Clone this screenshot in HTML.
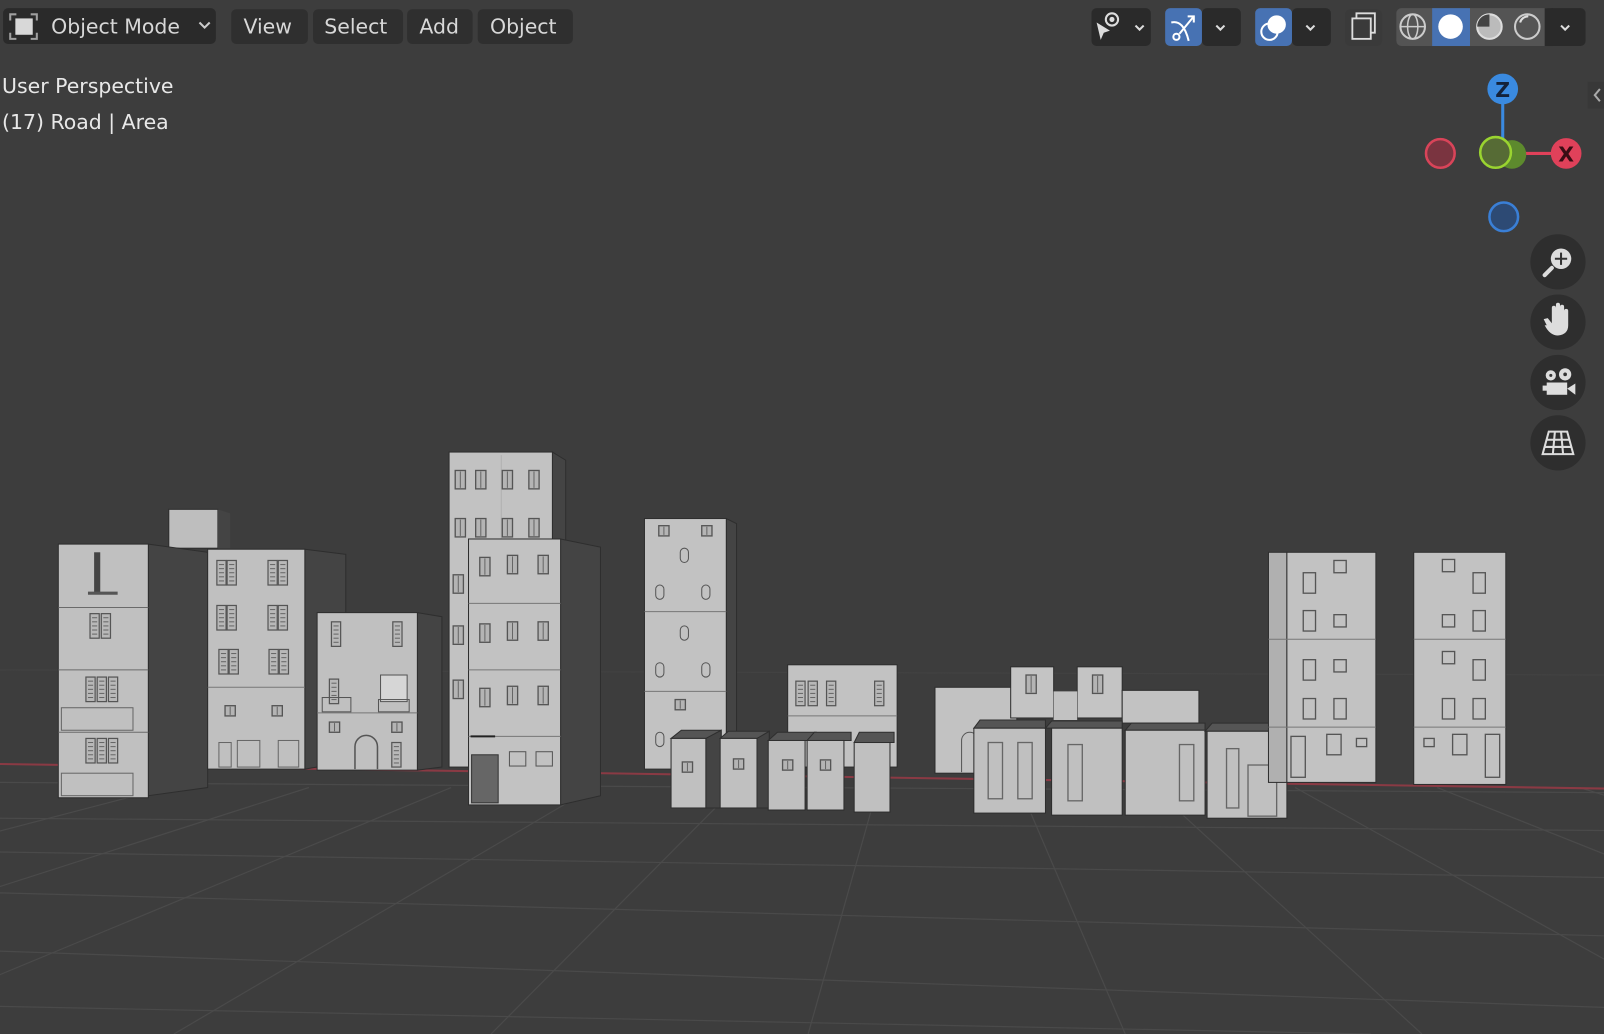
<!DOCTYPE html>
<html><head><meta charset="utf-8"><style>
html,body{margin:0;padding:0;background:#3d3d3d;overflow:hidden}
svg{display:block}
text{font-family:"DejaVu Sans","Liberation Sans",sans-serif}
</style></head><body>
<svg width="1604" height="1034" viewBox="0 0 1568 1011" preserveAspectRatio="none" xmlns="http://www.w3.org/2000/svg">
<defs>
<g id="w"><rect x="0" y="0" width="10" height="18" fill="#b4b4b4" stroke="#555" stroke-width="1.3"/><line x1="5" y1="1" x2="5" y2="17" stroke="#666" stroke-width="1"/></g>
<g id="ws"><rect x="0" y="0" width="10" height="10" fill="#b4b4b4" stroke="#555" stroke-width="1.3"/><line x1="5" y1="1" x2="5" y2="9" stroke="#666"/></g>
<g id="wt"><rect x="0" y="0" width="9" height="24" fill="#b8b8b8" stroke="#555" stroke-width="1.2"/><line x1="2" y1="4" x2="7" y2="4" stroke="#666"/><line x1="2" y1="8" x2="7" y2="8" stroke="#666"/><line x1="2" y1="12" x2="7" y2="12" stroke="#666"/><line x1="2" y1="16" x2="7" y2="16" stroke="#666"/><line x1="2" y1="20" x2="7" y2="20" stroke="#666"/></g>
</defs>
<rect width="1568" height="1011" fill="#3d3d3d"/>
<g stroke="#4a4a4a" stroke-width="1.2" fill="none">
<line x1="0" y1="655" x2="1568" y2="660" stroke="#424242"/>
<line x1="0" y1="765" x2="1568" y2="775"/>
<line x1="0" y1="800" x2="1568" y2="812"/>
<line x1="0" y1="833" x2="1568" y2="858"/>
<line x1="0" y1="873" x2="1568" y2="915"/>
<line x1="0" y1="930" x2="1568" y2="985"/>
<line x1="0" y1="984" x2="1340" y2="1011"/>
<line x1="580" y1="770" x2="170" y2="1011"/>
<line x1="719" y1="770" x2="480" y2="1011"/>
<line x1="858" y1="770" x2="790" y2="1011"/>
<line x1="997" y1="770" x2="1100" y2="1011"/>
<line x1="1127" y1="770" x2="1390" y2="1011"/>
<line x1="441" y1="770" x2="-140" y2="1011"/>
<line x1="302" y1="770" x2="-450" y2="1011"/>
<line x1="163" y1="770" x2="-760" y2="1011"/>
<line x1="1266" y1="770" x2="1700" y2="1011"/>
<line x1="1405" y1="770" x2="2010" y2="1011"/>
<line x1="1544" y1="770" x2="2320" y2="1011"/>
</g>
<line x1="0" y1="747" x2="1568" y2="771" stroke="#8a3a44" stroke-width="2"/>

<rect x="165" y="498" width="48" height="38" fill="#bebebe" stroke="#2e2e2e"/>
<polygon points="213,498 225,502 225,536 213,536" fill="#444"/>
<polygon points="145,532 203,540 203,770 145,778" fill="#444" stroke="#2e2e2e"/>
<rect x="57" y="532" width="88" height="248" fill="#c0c0c0" stroke="#2e2e2e"/>
<g stroke="#6a6a6a" fill="none"><line x1="57" y1="594" x2="145" y2="594"/><line x1="57" y1="655" x2="145" y2="655"/><line x1="57" y1="716" x2="145" y2="716"/></g>
<rect x="92" y="540" width="6" height="40" fill="#444"/><line x1="86" y1="580" x2="115" y2="580" stroke="#555" stroke-width="3"/>
<use href="#wt" x="88" y="600"/><use href="#wt" x="99" y="600"/>
<use href="#wt" x="84" y="662"/><use href="#wt" x="95" y="662"/><use href="#wt" x="106" y="662"/>
<rect x="60" y="692" width="70" height="22" fill="none" stroke="#666"/>
<use href="#wt" x="84" y="722"/><use href="#wt" x="95" y="722"/><use href="#wt" x="106" y="722"/>
<rect x="60" y="756" width="70" height="22" fill="none" stroke="#666"/>
<polygon points="298,537 338,542 338,745 298,752" fill="#444" stroke="#2e2e2e"/>
<rect x="203" y="537" width="95" height="215" fill="#c0c0c0" stroke="#2e2e2e"/>
<line x1="203" y1="672" x2="298" y2="672" stroke="#777"/>
<use href="#wt" x="212" y="548"/><use href="#wt" x="222" y="548"/><use href="#wt" x="262" y="548"/><use href="#wt" x="272" y="548"/>
<use href="#wt" x="212" y="592"/><use href="#wt" x="222" y="592"/><use href="#wt" x="262" y="592"/><use href="#wt" x="272" y="592"/>
<use href="#wt" x="214" y="635"/><use href="#wt" x="224" y="635"/><use href="#wt" x="263" y="635"/><use href="#wt" x="273" y="635"/>
<use href="#ws" x="220" y="690"/><use href="#ws" x="266" y="690"/>
<rect x="214" y="726" width="12" height="24" fill="none" stroke="#666"/><rect x="232" y="724" width="22" height="26" fill="none" stroke="#666"/><rect x="272" y="724" width="20" height="26" fill="none" stroke="#666"/>
<polygon points="408,599 432,603 432,750 408,753" fill="#444" stroke="#2e2e2e"/>
<rect x="310" y="599" width="98" height="154" fill="#c0c0c0" stroke="#2e2e2e"/>
<line x1="310" y1="697" x2="408" y2="697" stroke="#777"/>
<use href="#wt" x="324" y="608"/><use href="#wt" x="384" y="608"/>
<use href="#wt" x="322" y="664"/><rect x="372" y="660" width="26" height="26" fill="#d6d6d6" stroke="#555"/>
<rect x="315" y="682" width="28" height="14" fill="none" stroke="#555"/><rect x="370" y="684" width="30" height="12" fill="none" stroke="#555"/>
<use href="#ws" x="322" y="706"/><use href="#ws" x="383" y="706"/>
<path d="M347,752 V730 a11,11 0 0 1 22,0 V752" fill="none" stroke="#555" stroke-width="1.5"/>
<use href="#wt" x="383" y="726"/>
<polygon points="540,442 553,450 553,750 540,750" fill="#444" stroke="#2e2e2e"/>
<rect x="439" y="442" width="101" height="308" fill="#c2c2c2" stroke="#2e2e2e"/>
<line x1="490" y1="445" x2="490" y2="528" stroke="#b0b0b0"/>
<use href="#w" x="445" y="460"/><use href="#w" x="465" y="460"/><use href="#w" x="491" y="460"/><use href="#w" x="517" y="460"/>
<use href="#w" x="445" y="507"/><use href="#w" x="465" y="507"/><use href="#w" x="491" y="507"/><use href="#w" x="517" y="507"/>
<use href="#w" x="443" y="562"/><use href="#w" x="443" y="612"/><use href="#w" x="443" y="665"/>
<polygon points="548,527 587,535 587,778 548,787" fill="#444" stroke="#2e2e2e"/>
<rect x="458" y="527" width="90" height="260" fill="#c2c2c2" stroke="#2e2e2e"/>
<g stroke="#777"><line x1="458" y1="590" x2="548" y2="590"/><line x1="458" y1="655" x2="548" y2="655"/><line x1="458" y1="720" x2="548" y2="720"/></g>
<use href="#w" x="469" y="545"/><use href="#w" x="496" y="543"/><use href="#w" x="526" y="543"/>
<use href="#w" x="469" y="610"/><use href="#w" x="496" y="608"/><use href="#w" x="526" y="608"/>
<use href="#w" x="469" y="673"/><use href="#w" x="496" y="671"/><use href="#w" x="526" y="671"/>
<line x1="460" y1="720" x2="484" y2="720" stroke="#222" stroke-width="2"/>
<rect x="461" y="738" width="26" height="47" fill="#666" stroke="#333"/>
<rect x="498" y="735" width="16" height="14" fill="none" stroke="#555"/><rect x="524" y="735" width="16" height="14" fill="none" stroke="#555"/>
<polygon points="710,507 720,512 720,750 710,752" fill="#444" stroke="#2e2e2e"/>
<rect x="630" y="507" width="80" height="245" fill="#c2c2c2" stroke="#2e2e2e"/>
<g stroke="#777"><line x1="630" y1="598" x2="710" y2="598"/><line x1="630" y1="676" x2="710" y2="676"/></g>
<use href="#ws" x="644" y="514"/><use href="#ws" x="686" y="514"/>
<rect x="665" y="536" width="8" height="14" rx="4" fill="none" stroke="#555"/>
<rect x="641" y="572" width="8" height="14" rx="4" fill="none" stroke="#555"/><rect x="686" y="572" width="8" height="14" rx="4" fill="none" stroke="#555"/>
<rect x="665" y="612" width="8" height="14" rx="4" fill="none" stroke="#555"/>
<rect x="641" y="648" width="8" height="14" rx="4" fill="none" stroke="#555"/><rect x="686" y="648" width="8" height="14" rx="4" fill="none" stroke="#555"/>
<use href="#ws" x="660" y="684"/><rect x="641" y="716" width="8" height="14" rx="4" fill="none" stroke="#555"/>
<rect x="770" y="650" width="107" height="100" fill="#c2c2c2" stroke="#2e2e2e"/>
<line x1="770" y1="700" x2="877" y2="700" stroke="#777"/>
<use href="#wt" x="778" y="666"/><use href="#wt" x="790" y="666"/><use href="#wt" x="808" y="666"/><use href="#wt" x="855" y="666"/>
<g stroke="#2e2e2e">
<polygon points="656,722 666,714 705,714 705,722" fill="#555"/><polygon points="690,722 705,714 705,790 690,790" fill="#444"/><rect x="656" y="722" width="34" height="68" fill="#c0c0c0"/>
<polygon points="704,722 712,715 752,715 752,722" fill="#555"/><polygon points="740,722 752,715 752,790 740,790" fill="#444"/><rect x="704" y="722" width="36" height="68" fill="#c0c0c0"/>
<polygon points="751,724 760,716 798,716 798,724" fill="#555"/><rect x="751" y="724" width="36" height="68" fill="#c0c0c0"/>
<polygon points="789,724 796,716 832,716 832,724" fill="#555"/><rect x="789" y="724" width="36" height="68" fill="#c0c0c0"/>
<polygon points="835,726 840,716 874,716 874,726" fill="#555"/><rect x="835" y="726" width="35" height="68" fill="#c0c0c0"/>
</g>
<use href="#ws" x="667" y="745"/><use href="#ws" x="717" y="742"/><use href="#ws" x="765" y="743"/><use href="#ws" x="802" y="743"/>
<rect x="914" y="672" width="80" height="84" fill="#c2c2c2" stroke="#2e2e2e"/>
<rect x="988" y="652" width="42" height="50" fill="#c4c4c4" stroke="#2e2e2e"/>
<rect x="1053" y="652" width="44" height="50" fill="#c4c4c4" stroke="#2e2e2e"/>
<rect x="1030" y="676" width="23" height="28" fill="#c2c2c2"/>
<rect x="1097" y="675" width="75" height="32" fill="#c2c2c2" stroke="#2e2e2e"/>
<use href="#w" x="1003" y="660"/><use href="#w" x="1068" y="660"/>
<path d="M940,755 V724 a8,8 0 0 1 16,0 V755" fill="none" stroke="#555"/>
<g stroke="#2e2e2e">
<polygon points="952,712 958,704 1022,704 1022,712" fill="#555"/><rect x="952" y="712" width="70" height="83" fill="#c0c0c0"/>
<polygon points="1022,712 1028,705 1097,705 1097,712" fill="#555"/><rect x="1028" y="712" width="69" height="85" fill="#c0c0c0"/>
<polygon points="1100,714 1106,707 1178,707 1178,714" fill="#555"/><rect x="1100" y="714" width="78" height="83" fill="#c0c0c0"/>
<polygon points="1178,715 1185,707 1250,707 1258,715" fill="#555"/><rect x="1180" y="715" width="78" height="85" fill="#c0c0c0"/>
</g>
<g fill="none" stroke="#666" stroke-width="1.3">
<rect x="966" y="726" width="14" height="55"/><rect x="995" y="726" width="14" height="55"/>
<rect x="1044" y="728" width="14" height="55"/><rect x="1153" y="728" width="14" height="55"/>
<rect x="1199" y="732" width="12" height="58"/><rect x="1220" y="748" width="28" height="50"/>
</g>
<rect x="1240" y="540" width="18" height="225" fill="#b0b0b0" stroke="#2e2e2e"/>
<rect x="1258" y="540" width="87" height="225" fill="#c2c2c2" stroke="#2e2e2e"/>
<g stroke="#777"><line x1="1240" y1="625" x2="1345" y2="625"/><line x1="1240" y1="711" x2="1345" y2="711"/></g>
<g fill="none" stroke="#555" stroke-width="1.3">
<rect x="1274" y="560" width="12" height="20"/><rect x="1304" y="548" width="12" height="12"/>
<rect x="1274" y="597" width="12" height="20"/><rect x="1304" y="601" width="12" height="12"/>
<rect x="1274" y="645" width="12" height="20"/><rect x="1304" y="645" width="12" height="12"/>
<rect x="1274" y="683" width="12" height="20"/><rect x="1304" y="683" width="12" height="20"/>
<rect x="1262" y="720" width="14" height="40"/><rect x="1297" y="718" width="14" height="20"/><rect x="1326" y="722" width="10" height="8"/>
</g>
<rect x="1382" y="540" width="90" height="227" fill="#c2c2c2" stroke="#2e2e2e"/>
<g stroke="#777"><line x1="1382" y1="625" x2="1472" y2="625"/><line x1="1382" y1="711" x2="1472" y2="711"/></g>
<g fill="none" stroke="#555" stroke-width="1.3">
<rect x="1410" y="547" width="12" height="12"/><rect x="1440" y="560" width="12" height="20"/>
<rect x="1410" y="601" width="12" height="12"/><rect x="1440" y="597" width="12" height="20"/>
<rect x="1410" y="637" width="12" height="12"/><rect x="1440" y="645" width="12" height="20"/>
<rect x="1410" y="683" width="12" height="20"/><rect x="1440" y="683" width="12" height="20"/>
<rect x="1392" y="722" width="10" height="8"/><rect x="1420" y="718" width="14" height="20"/><rect x="1452" y="718" width="14" height="42"/>
</g>

<rect x="3" y="8" width="208" height="35" rx="5" fill="#2a2a2a"/>
<g stroke="#a0a0a0" stroke-width="2" fill="none"><path d="M10,20 v-6 h6 M30,14 h6 v6 M36,32 v6 h-6 M16,38 h-6 v-6"/></g>
<rect x="15" y="18" width="17" height="16" fill="#d8d8d8"/>
<text x="50" y="33" font-size="20" fill="#d8d8d8">Object Mode</text>
<path d="M195,22 l5,5 l5,-5" stroke="#ccc" stroke-width="2" fill="none"/>
<rect x="226" y="9" width="75" height="34" rx="5" fill="#2f2f2f"/><text x="238" y="33" font-size="20" fill="#d8d8d8">View</text>
<rect x="306" y="9" width="88" height="34" rx="5" fill="#2f2f2f"/><text x="317" y="33" font-size="20" fill="#d8d8d8">Select</text>
<rect x="398" y="9" width="64" height="34" rx="5" fill="#2f2f2f"/><text x="410" y="33" font-size="20" fill="#d8d8d8">Add</text>
<rect x="467" y="9" width="93" height="34" rx="5" fill="#2f2f2f"/><text x="479" y="33" font-size="20" fill="#d8d8d8">Object</text>
<text x="2" y="91" font-size="20" fill="#e8e8e8">User Perspective</text>
<text x="2" y="126" font-size="20" fill="#e8e8e8">(17) Road | Area</text>

<rect x="1067" y="8" width="58" height="37" rx="5" fill="#2a2a2a"/>
<circle cx="1087" cy="19" r="6" fill="none" stroke="#ddd" stroke-width="2"/><circle cx="1087" cy="19" r="2.5" fill="#ddd"/>
<path d="M1072,22 l13,8 l-6,2 l-3,7z" fill="#ddd"/>
<path d="M1110,25 l4,4 l4,-4" stroke="#ddd" stroke-width="2" fill="none"/>
<rect x="1139" y="8" width="36" height="37" rx="5" fill="#4772b3"/>
<rect x="1175" y="8" width="38" height="37" rx="5" fill="#2a2a2a"/>
<path d="M1145,22 q12,-3 17,18" stroke="#fff" stroke-width="2" fill="none"/><circle cx="1150" cy="36" r="3" fill="none" stroke="#fff" stroke-width="2"/><path d="M1153,33 l14,-17 m-6,0 h6 v6" stroke="#fff" stroke-width="2" fill="none"/>
<path d="M1189,25 l4,4 l4,-4" stroke="#ddd" stroke-width="2" fill="none"/>
<rect x="1227" y="8" width="36" height="37" rx="5" fill="#4772b3"/>
<rect x="1263" y="8" width="38" height="37" rx="5" fill="#2a2a2a"/>
<circle cx="1248" cy="24" r="9" fill="#fff"/><circle cx="1241" cy="31" r="8" fill="none" stroke="#fff" stroke-width="2"/>
<path d="M1277,25 l4,4 l4,-4" stroke="#ddd" stroke-width="2" fill="none"/>
<rect x="1315" y="9" width="36" height="36" rx="5" fill="#3a3a3a"/>
<rect x="1322" y="18" width="18" height="20" fill="none" stroke="#ddd" stroke-width="1.8"/><path d="M1326,18 v-5 h18 v19 h-4" stroke="#ddd" stroke-width="1.8" fill="none"/>
<rect x="1365" y="8" width="152" height="37" rx="5" fill="#545454"/>
<rect x="1400" y="8" width="37" height="37" fill="#4772b3"/>
<rect x="1512" y="8" width="38" height="37" rx="5" fill="#2a2a2a"/><rect x="1510" y="8" width="8" height="37" fill="#2a2a2a"/>
<circle cx="1381" cy="26" r="12" fill="none" stroke="#ccc" stroke-width="2"/><ellipse cx="1381" cy="26" rx="5" ry="12" fill="none" stroke="#ccc" stroke-width="1.5"/><line x1="1369" y1="26" x2="1393" y2="26" stroke="#ccc" stroke-width="1.5"/>
<circle cx="1418" cy="26" r="12" fill="#fff"/>
<circle cx="1456" cy="26" r="12" fill="#bbb" stroke="#ddd" stroke-width="2"/><path d="M1456,14 a12,12 0 0 0 -12,12 h12z" fill="#444"/>
<circle cx="1493" cy="26" r="12" fill="#555" stroke="#ccc" stroke-width="2"/><path d="M1486,22 a8,8 0 0 1 8,-6" stroke="#ddd" stroke-width="2" fill="none"/>
<path d="M1526,25 l4,4 l4,-4" stroke="#ddd" stroke-width="2" fill="none"/>

<rect x="1552" y="80" width="16" height="26" fill="#383838"/>
<path d="M1564,87 l-5,6 l5,6" stroke="#aaa" stroke-width="2" fill="none"/>

<line x1="1469" y1="87" x2="1469" y2="145" stroke="#3a8ae0" stroke-width="3"/>
<line x1="1480" y1="150" x2="1531" y2="150" stroke="#e0415a" stroke-width="3"/>
<circle cx="1408" cy="150" r="14" fill="#7a3440" stroke="#d94459" stroke-width="2.5"/>
<circle cx="1470" cy="212" r="14" fill="#2d4a74" stroke="#3a7fd6" stroke-width="2.5"/>
<circle cx="1478" cy="151" r="14" fill="#5d8a2d"/>
<circle cx="1462" cy="149" r="15" fill="#566b35" stroke="#9ad430" stroke-width="2.5"/>
<circle cx="1469" cy="87" r="15" fill="#3a8ae0"/><text x="1469" y="95" font-size="20" font-weight="bold" text-anchor="middle" fill="#14223a">Z</text>
<circle cx="1531" cy="150" r="15" fill="#e0415a"/><text x="1531" y="158" font-size="20" font-weight="bold" text-anchor="middle" fill="#3a0d14">X</text>

<circle cx="1523" cy="256" r="27" fill="#2e2e2e"/>
<circle cx="1526" cy="253" r="10" fill="#ddd"/><line x1="1517" y1="262" x2="1510" y2="269" stroke="#ddd" stroke-width="4" stroke-linecap="round"/><path d="M1526,247 v12 M1520,253 h12" stroke="#333" stroke-width="2"/>
<circle cx="1523" cy="315" r="27" fill="#2e2e2e"/>
<path d="M1512,318 l-3,-6 l4,-1 l4,5 v-15 a2,2 0 0 1 4,0 v10 v-13 a2,2 0 0 1 4,0 v13 v-11 a2,2 0 0 1 4,0 v12 v-8 a2,2 0 0 1 4,0 v14 q0,9 -10,10 q-8,0 -13,-10z" fill="#ddd"/>
<circle cx="1523" cy="374" r="27" fill="#2e2e2e"/>
<circle cx="1516" cy="367" r="5" fill="#ddd"/><circle cx="1530" cy="366" r="6" fill="#ddd"/><circle cx="1516" cy="367" r="1.5" fill="#333"/><circle cx="1530" cy="366" r="1.8" fill="#333"/>
<rect x="1512" y="374" width="20" height="12" fill="#ddd"/><rect x="1508" y="377" width="5" height="5" fill="#ddd"/><path d="M1532,380 l8,-5 v11z" fill="#ddd"/>
<circle cx="1523" cy="433" r="27" fill="#2e2e2e"/>
<g stroke="#ddd" stroke-width="2" fill="none"><path d="M1514,422 h18 l6,22 h-30z"/><path d="M1520,422 l-2,22 M1526,422 l2,22 M1512,430 h22 M1510,437 h26"/></g>
</svg>
</body></html>
